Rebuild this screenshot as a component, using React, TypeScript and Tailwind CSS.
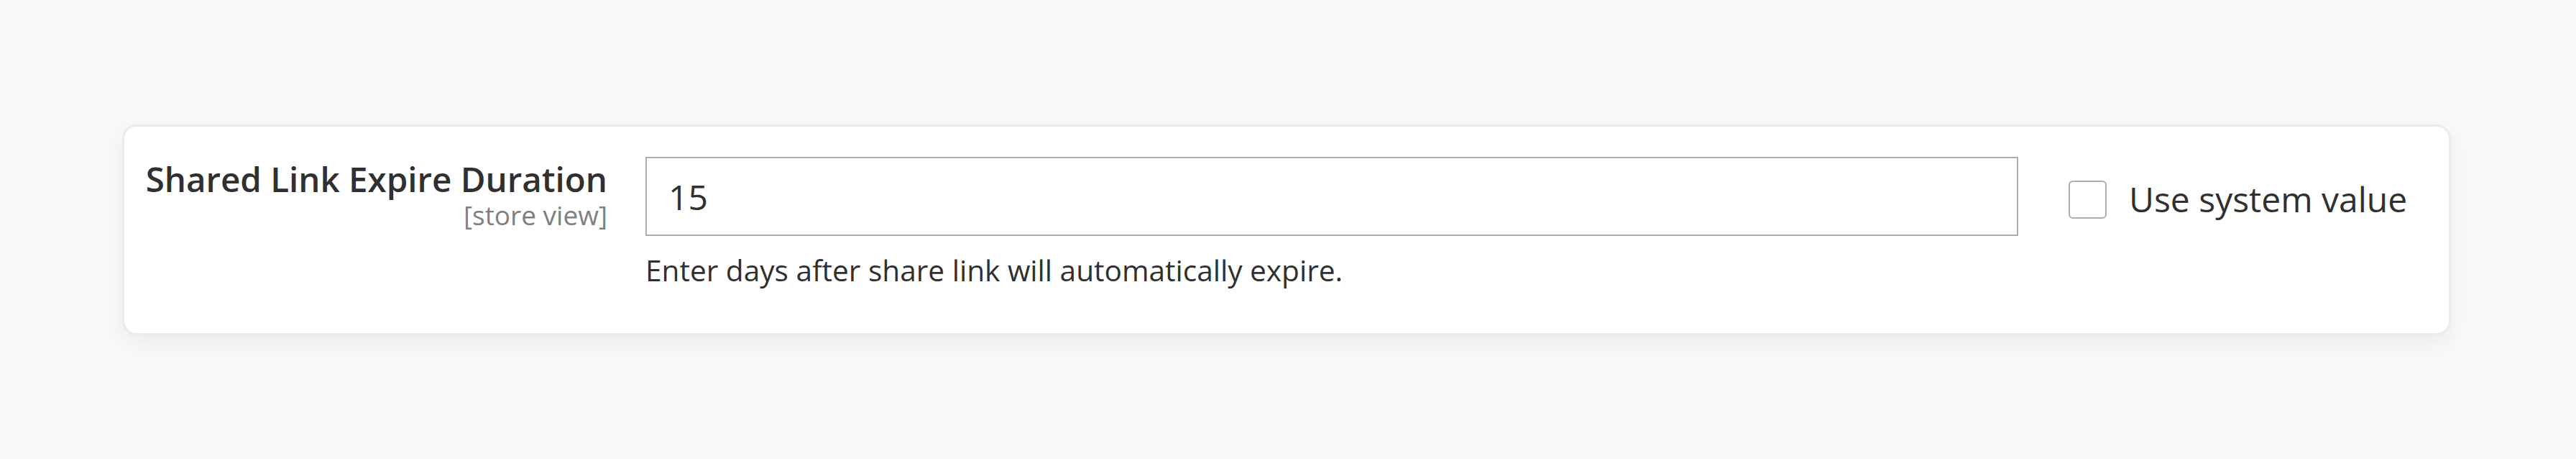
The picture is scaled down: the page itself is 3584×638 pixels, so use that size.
import { useState } from "react";

const font = { fontFamily: '"Open Sans", "Noto Sans", sans-serif' };

function ConfigRow() {
  const [value, setValue] = useState("15");
  const [useSystem, setUseSystem] = useState(false);

  return (
    <div className="flex items-start">
      {/* label column */}
      <div className="w-[672px] shrink-0 pt-[3px] text-right">
        <div className="text-[47.5px] leading-[56px] font-semibold text-[#303030]">
          Shared Link Expire Duration
        </div>
        <div className="text-[37px] leading-[43px] text-[#808080]">[store view]</div>
      </div>

      {/* control column */}
      <div className="ml-[53px] w-[1910px] shrink-0">
        <input
          type="text"
          value={value}
          onChange={(e) => setValue(e.target.value)}
          className="block h-[110px] w-full border-2 border-[#adadad] bg-white px-[30px] text-[48px] text-[#303030] outline-none"
          style={font}
        />
        <p className="mt-[18px] text-[40.6px] text-[#303030]">
          Enter days after share link will automatically expire.
        </p>
      </div>

      {/* use system value */}
      <label className="ml-[70px] flex cursor-pointer items-start gap-[31px]">
        <span
          onClick={() => setUseSystem(!useSystem)}
          className="mt-[33px] block h-[53px] w-[53px] shrink-0 rounded-[6px] border-2 border-[#adadad] bg-white"
        >
          {useSystem && (
            <svg viewBox="0 0 24 24" className="h-full w-full text-[#303030]">
              <path d="M5 12l5 5 9-10" fill="none" stroke="currentColor" strokeWidth="3" />
            </svg>
          )}
        </span>
        <span className="mt-[23px] text-[48px] text-[#303030]">Use system value</span>
      </label>
    </div>
  );
}

export default function App() {
  return (
    <div className="h-[638px] w-[3584px] overflow-hidden bg-[#f8f8f8] pt-[173px]" style={font}>
      <div className="ml-[170px] w-[3240px] rounded-[20px] border-[3px] border-[#ebebeb] bg-white pt-[42px] pb-[56px] shadow-[0_10px_24px_rgba(0,0,0,0.05)]">
        <ConfigRow />
      </div>
    </div>
  );
}
